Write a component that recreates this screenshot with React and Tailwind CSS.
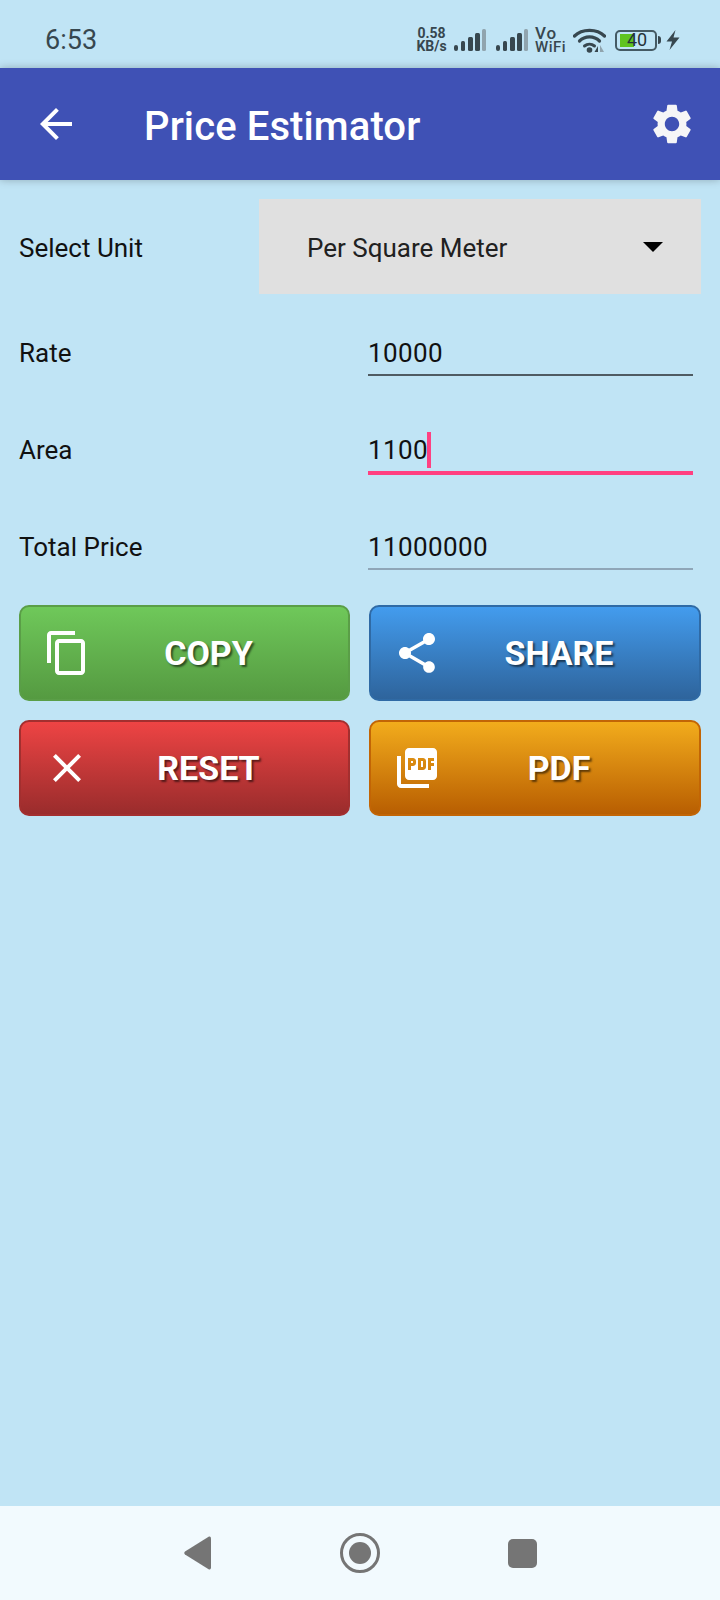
import React from "react";
import { MdArrowBack, MdSettings, MdContentCopy, MdShare, MdClose, MdPictureAsPdf } from "react-icons/md";

function Signal() {
  return (
    <svg width="33" height="22" viewBox="0 0 33 22">
      <rect x="0" y="16" width="4" height="6" rx="2" fill="#37474f" />
      <rect x="7" y="12" width="4" height="10" rx="1.5" fill="#37474f" />
      <rect x="14" y="8" width="5" height="14" rx="1.5" fill="#37474f" />
      <rect x="21" y="4" width="5" height="18" rx="1.5" fill="#37474f" />
      <rect x="28" y="0" width="4" height="22" rx="1.5" fill="#90a4ae" />
    </svg>
  );
}

function Wifi() {
  return (
    <svg width="33" height="26" viewBox="0 0 33 26" fill="none">
      <path d="M1.5 9 C9 1.5 24 1.5 31.5 9" stroke="#37474f" strokeWidth="3.2" strokeLinecap="round" />
      <path d="M6.5 14 C12 8.5 21 8.5 26.5 14" stroke="#37474f" strokeWidth="3.2" strokeLinecap="round" />
      <path d="M11.5 19 C14.5 16.5 18.5 16.5 21.5 19" stroke="#37474f" strokeWidth="3" strokeLinecap="round" />
      <circle cx="16.5" cy="23" r="2.8" fill="#37474f" />
      <path d="M25 19 L25 25 L21.5 25 Z" fill="#37474f" />
      <path d="M27 18 L31 25 L27 25 Z" fill="#90a4ae" />
    </svg>
  );
}

function Battery() {
  return (
    <div className="flex items-center gap-[1px]">
      <div className="relative flex h-[21px] w-[42px] items-center justify-center rounded-[5px] border-2 border-[#455a64] text-[18px] leading-none text-[#263238]">
        <div className="absolute left-[3px] top-[2px] bottom-[2px] w-[14px] bg-[#5fc31f]" />
        <span className="relative pl-[2px]">40</span>
      </div>
      <div className="h-[8px] w-[3px] rounded-r-sm bg-[#37474f]" />
    </div>
  );
}

function Bolt() {
  return (
    <svg width="14" height="20" viewBox="0 0 14 20">
      <path d="M9.5 0 L0.5 11.5 L6 11.5 L3.5 20 L13.5 7.5 L7.5 7.5 Z" fill="#37474f" />
    </svg>
  );
}

function ActionButton({ icon, label, className }) {
  return (
    <div className={"flex h-[96px] items-center rounded-[10px] border-2 pl-[22px] pr-[22px] " + className}>
      {icon}
      <span className="flex-1 text-center text-[34px] font-bold leading-none text-white [text-shadow:2px_2px_2px_rgba(0,0,0,0.55)]">
        {label}
      </span>
    </div>
  );
}

export default function App() {
  return (
    <div
      className="flex min-h-[1600px] w-[720px] flex-col bg-[#c0e4f5] text-[#111]"
      style={{ fontFamily: "Roboto, sans-serif" }}
    >
      <div className="flex h-[68px] items-center justify-between pl-[45px] pr-[40px] pt-[12px]">
        <span className="text-[27px] leading-none text-[#37474f]">6:53</span>
        <div className="flex items-center">
          <div className="flex w-[31px] flex-col items-center text-[14px] font-bold leading-[13px] text-[#37474f]">
            <span>0.58</span>
            <span>KB/s</span>
          </div>
          <div className="ml-[7px]"><Signal /></div>
          <div className="ml-[9px]"><Signal /></div>
          <div className="ml-[6px] flex w-[32px] flex-col font-medium text-[#37474f]">
            <span className="text-[17px] leading-[15px] tracking-[1px]">Vo</span>
            <span className="text-[15px] leading-[13px] tracking-[0.5px]">WiFi</span>
          </div>
          <div className="ml-[6px]"><Wifi /></div>
          <div className="ml-[9px]"><Battery /></div>
          <div className="ml-[5px]"><Bolt /></div>
        </div>
      </div>

      <div className="flex h-[112px] items-center bg-[#3f51b5] pl-[32px] pr-[24px] shadow-[0_0_8px_rgba(0,0,0,0.25)]">
        <MdArrowBack size={48} color="#fff" />
        <span className="ml-[64px] flex-1 pt-[5px] text-[40px] font-medium leading-none tracking-[0.1px] text-white">Price Estimator</span>
        <MdSettings size={48} color="#f5f5f7" />
      </div>

      <div className="flex flex-1 flex-col px-[19px] pt-[19px]">
        <div className="flex items-center justify-between">
          <span className="pt-[3px] text-[26px]">Select Unit</span>
          <div className="flex h-[95px] w-[442px] items-center justify-between bg-[#e0e0e0] pl-[48px] pr-[38px]">
            <span className="pt-[3px] text-[26px] text-[#212121]">Per Square Meter</span>
            <div className="h-0 w-0 border-x-[10px] border-t-[10px] border-x-transparent border-t-black" />
          </div>
        </div>

        <div className="mt-[39px] flex items-center justify-between pr-[8px]">
          <span className="pb-[2px] text-[26px]">Rate</span>
          <div className="flex h-[43px] w-[325px] items-center border-b-2 border-[#4f5b62] text-[26px] tracking-[0.4px]">10000</div>
        </div>

        <div className="mt-[53px] flex items-center justify-between pr-[8px]">
          <span className="pb-[4px] text-[26px]">Area</span>
          <div className="flex h-[46px] w-[325px] items-center border-b-4 border-[#ff4081] text-[26px] tracking-[0.4px]">
            <span>1100</span>
            <div className="-ml-[1px] h-[36px] w-[4px] bg-[#ff4081]" />
          </div>
        </div>

        <div className="mt-[52px] flex items-center justify-between pr-[8px]">
          <span className="pb-[2px] text-[26px]">Total Price</span>
          <div className="flex h-[43px] w-[325px] items-center border-b-2 border-[#8fa6b8] text-[26px] tracking-[0.4px]">11000000</div>
        </div>

        <div className="mt-[35px] grid grid-cols-[331px_332px] justify-between gap-y-[19px]">
          <ActionButton
            label="COPY"
            icon={<MdContentCopy size={48} color="#fff" />}
            className="border-[#5a9e47] bg-gradient-to-b from-[#6fc85a] to-[#559a41]"
          />
          <ActionButton
            label="SHARE"
            icon={<MdShare size={48} color="#fff" />}
            className="border-[#2f6aa5] bg-gradient-to-b from-[#439cee] to-[#2e649c]"
          />
          <ActionButton
            label="RESET"
            icon={<MdClose size={48} color="#fff" />}
            className="border-[#a32f2f] bg-gradient-to-b from-[#ee4444] to-[#9a2c2c]"
          />
          <ActionButton
            label="PDF"
            icon={<MdPictureAsPdf size={48} color="#fff" />}
            className="border-[#c26505] bg-gradient-to-b from-[#f2ac1c] to-[#b85e02]"
          />
        </div>
      </div>

      <div className="flex h-[94px] items-center justify-center bg-[#f2fafe]">
        <svg className="mr-[129px]" width="27" height="34" viewBox="0 0 27 34">
          <path d="M25 0.5 Q27 0 27 2.5 L27 31.5 Q27 34 25 33.5 L1 18.5 Q-0.5 17 1 15.5 Z" fill="#757575" />
        </svg>
        <div className="mr-[128px] flex h-[40px] w-[40px] items-center justify-center rounded-full border-[3px] border-[#757575]">
          <div className="h-[22px] w-[22px] rounded-full bg-[#757575]" />
        </div>
        <div className="h-[29px] w-[29px] rounded-[5px] bg-[#757575]" />
      </div>
    </div>
  );
}
